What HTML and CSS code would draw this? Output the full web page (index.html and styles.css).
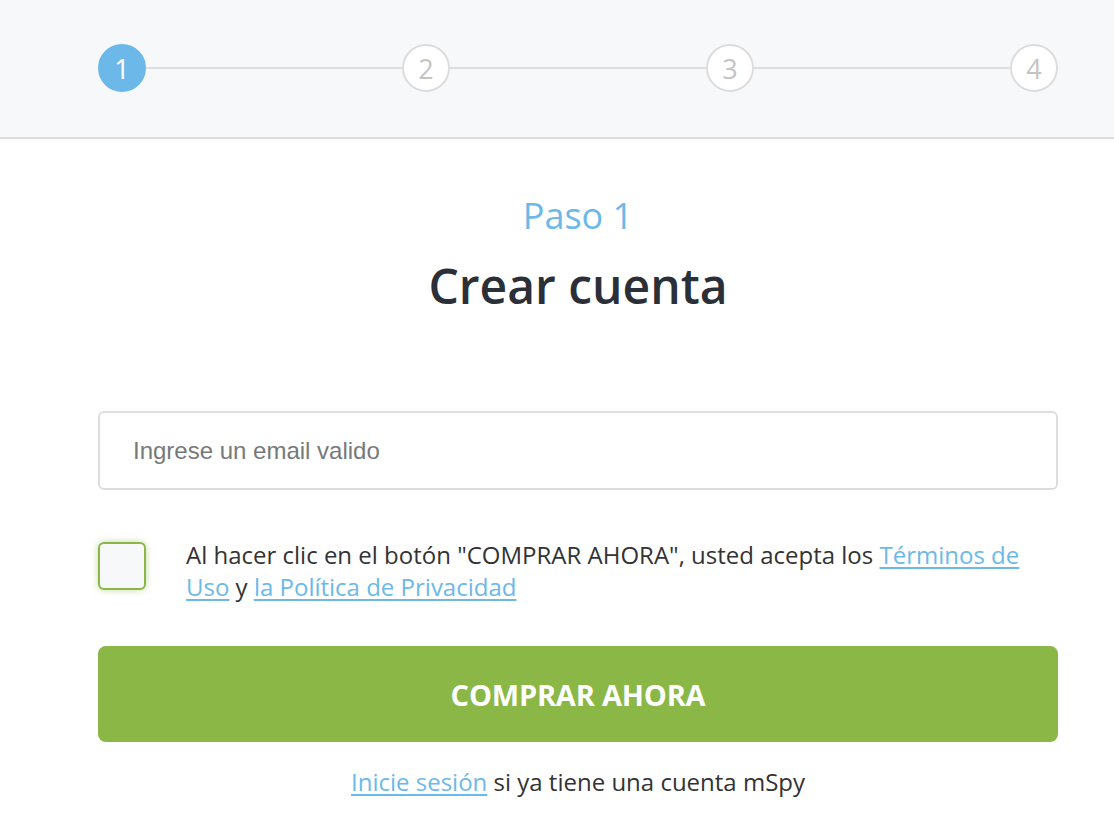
FILE: index.html
```html
<!DOCTYPE html>
<html lang="es">
<head>
  <meta charset="UTF-8">
  <meta name="viewport" content="width=device-width, initial-scale=1.0">
  <title>Crear cuenta</title>
  <link rel="stylesheet" href="styles.css">
</head>
<body>
  <header class="steps-bar">
    <ol class="steps">
      <li class="step active">1</li>
      <li class="step-line"></li>
      <li class="step">2</li>
      <li class="step-line"></li>
      <li class="step">3</li>
      <li class="step-line"></li>
      <li class="step">4</li>
    </ol>
  </header>

  <main class="container">
    <p class="step-label">Paso 1</p>
    <h1 class="title">Crear cuenta</h1>

    <form class="signup">
      <input class="email" type="email" placeholder="Ingrese un email valido">

      <label class="terms">
        <span class="checkbox"></span>
        <span class="terms-text">Al hacer clic en el botón "COMPRAR AHORA", usted acepta los <a href="#">Términos de Uso</a> y <a href="#">la Política de Privacidad</a></span>
      </label>

      <button class="buy" type="button">COMPRAR AHORA</button>
    </form>

    <p class="login"><a href="#">Inicie sesión</a> si ya tiene una cuenta mSpy</p>
  </main>
</body>
</html>
```

FILE: styles.css
```css
:root {
  --blue: #6cb9e9;
  --green: #8ab746;
  --text: #2b2f38;
  --border: #dddddd;
}

html,
body {
  margin: 0;
  padding: 0;
}

body {
  font-family: "Open Sans", "Noto Sans", sans-serif;
  color: var(--text);
  background: #fff;
}

.steps-bar {
  background: #f7f8fa;
  border-bottom: 2px solid var(--border);
  height: 137px;
  padding: 0 56px 0 98px;
}

.steps {
  list-style: none;
  margin: 0;
  padding: 44px 0 0;
  display: flex;
  align-items: center;
}

.step {
  box-sizing: border-box;
  width: 48px;
  height: 48px;
  border-radius: 50%;
  border: 2px solid var(--border);
  background: #fff;
  color: #c4c4c4;
  font-size: 27px;
  display: flex;
  align-items: center;
  justify-content: center;
  flex: none;
}

.step.active {
  background: var(--blue);
  border-color: var(--blue);
  color: #fff;
}

.step-line {
  flex: 1;
  height: 2px;
  background: var(--border);
}

.container {
  width: 960px;
  margin: 0 auto 0 98px;
  text-align: center;
}

.step-label {
  margin: 55px 0 0;
  font-size: 36px;
  line-height: 44px;
  color: var(--blue);
}

.title {
  margin: 18px 0 0;
  font-size: 48px;
  line-height: 60px;
  font-weight: 600;
}

.signup {
  margin-top: 95px;
  text-align: left;
}

.email {
  box-sizing: border-box;
  width: 100%;
  height: 79px;
  border: 2px solid var(--border);
  border-radius: 6px;
  padding: 0 33px;
  font-family: "Liberation Sans", Arial, sans-serif;
  font-size: 24px;
  color: #333;
  outline: none;
}

.email::placeholder {
  color: #76797c;
}

.terms {
  display: flex;
  gap: 40px;
  margin-top: 52px;
}

.checkbox {
  box-sizing: border-box;
  width: 48px;
  height: 48px;
  flex: none;
  border: 2px solid var(--green);
  border-radius: 6px;
  background: #f7f8fa;
  box-shadow: 0 0 6px rgba(138, 183, 70, 0.5);
}

.terms-text {
  font-size: 24px;
  line-height: 32px;
  color: #333;
  margin-top: -3px;
}

a {
  color: var(--blue);
  text-decoration: underline;
  text-underline-offset: 3px;
}

.buy {
  display: block;
  width: 100%;
  height: 96px;
  margin-top: 43px;
  border: 0;
  border-radius: 8px;
  background: var(--green);
  color: #fff;
  font-family: "Open Sans", "Noto Sans", sans-serif;
  font-size: 29px;
  font-weight: 700;
  letter-spacing: -0.2px;
}

.login {
  margin: 24px 0 0;
  font-size: 24px;
  line-height: 32px;
  color: #333;
}
```
